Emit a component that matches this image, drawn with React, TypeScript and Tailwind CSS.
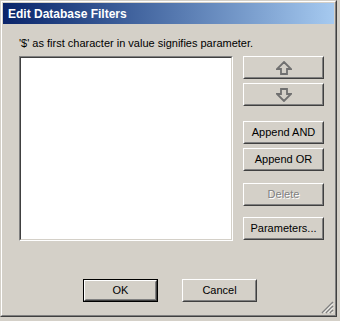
import React from "react";

const font = { fontFamily: '"Liberation Sans", Arial, sans-serif' };

function Bevel({
  children,
  className = "",
  isDefault = false,
}: {
  children: React.ReactNode;
  className?: string;
  isDefault?: boolean;
}) {
  const inner = (
    <div className="w-full h-full border border-t-white border-l-white border-r-[#404040] border-b-[#404040]">
      <div className="w-full h-full border border-t-[#d4d0c8] border-l-[#d4d0c8] border-r-[#808080] border-b-[#808080] flex items-center justify-center">
        {children}
      </div>
    </div>
  );
  if (isDefault) {
    return <div className={`border border-black ${className}`}>{inner}</div>;
  }
  return <div className={className}>{inner}</div>;
}

function Arrow({ down = false }: { down?: boolean }) {
  return (
    <svg width="16" height="14" viewBox="0 0 16 14" className={down ? "rotate-180" : ""}>
      <path
        d="M8 1 L15 8 L11 8 L11 13 L5 13 L5 8 L1 8 Z"
        fill="#d4d0c8"
        stroke="#707070"
        strokeWidth="1.8"
        strokeLinejoin="miter"
      />
    </svg>
  );
}

function Label({ text, disabled = false }: { text: string; disabled?: boolean }) {
  if (disabled) {
    return (
      <span className="text-[11px] text-[#808080] [text-shadow:1px_1px_0_#ffffff]">{text}</span>
    );
  }
  return <span className="text-[11px] text-black">{text}</span>;
}

export default function App() {
  return (
    <div className="w-[340px] h-[321px] bg-[#d4d0c8]" style={font}>
      <div className="w-[337px] h-[317px] border border-t-[#d4d0c8] border-l-[#d4d0c8] border-r-[#404040] border-b-[#404040]">
        <div className="w-full h-full border border-t-white border-l-white border-r-[#808080] border-b-[#808080] p-px flex flex-col relative">
          <div className="h-[21px] flex items-center pl-[5px] bg-gradient-to-r from-[#0a246a] to-[#a6caf0]">
            <span className="text-white font-bold text-[12px]">Edit Database Filters</span>
          </div>

          <div className="flex flex-col pl-[16px]">
            <div className="mt-[12px] h-[14px] leading-[14px] text-[11px] text-black">
              '$' as first character in value signifies parameter.
            </div>

            <div className="flex mt-[6px]">
              <div className="w-[214px] h-[185px] border border-t-[#808080] border-l-[#808080] border-r-white border-b-white">
                <div className="w-full h-full border border-t-[#404040] border-l-[#404040] border-r-[#d4d0c8] border-b-[#d4d0c8] bg-white" />
              </div>

              <div className="flex flex-col ml-[10px] w-[81px]">
                <Bevel className="h-[23px]">
                  <Arrow />
                </Bevel>
                <Bevel className="h-[23px] mt-[4px]">
                  <Arrow down />
                </Bevel>
                <Bevel className="h-[23px] mt-[15px]">
                  <Label text="Append AND" />
                </Bevel>
                <Bevel className="h-[23px] mt-[4px]">
                  <Label text="Append OR" />
                </Bevel>
                <Bevel className="h-[23px] mt-[12px]">
                  <Label text="Delete" disabled />
                </Bevel>
                <Bevel className="h-[23px] mt-[11px]">
                  <Label text="Parameters..." />
                </Bevel>
              </div>
            </div>

            <div className="flex mt-[38px] pl-[64px]">
              <Bevel className="w-[75px] h-[23px]" isDefault>
                <Label text="OK" />
              </Bevel>
              <Bevel className="w-[75px] h-[23px] ml-[24px]">
                <Label text="Cancel" />
              </Bevel>
            </div>
          </div>

          <svg width="13" height="13" viewBox="0 0 13 13" className="absolute right-[1px] bottom-[1px]">
            <path d="M12 1 L1 12 M12 5 L5 12 M12 9 L9 12" stroke="#808080" strokeWidth="1.5" />
            <path d="M12 2.6 L2.6 12 M12 6.6 L6.6 12 M12 10.6 L10.6 12" stroke="#ffffff" strokeWidth="1" />
          </svg>
        </div>
      </div>
    </div>
  );
}
